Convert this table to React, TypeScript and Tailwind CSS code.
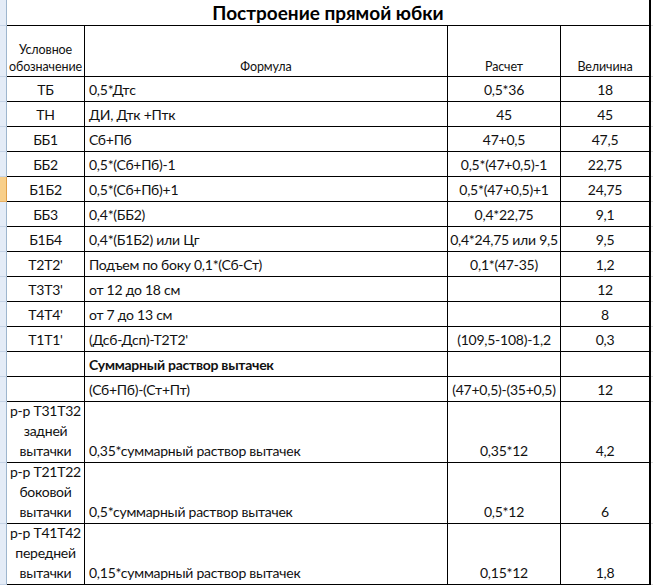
type Row = { mark: string[]; formula: string; calc: string; value: string; bold?: boolean; tall?: boolean };

const rows: Row[] = [
  { mark: ["ТБ"], formula: "0,5*Дтс", calc: "0,5*36", value: "18" },
  { mark: ["ТН"], formula: "ДИ, Дтк +Птк", calc: "45", value: "45" },
  { mark: ["ББ1"], formula: "Сб+Пб", calc: "47+0,5", value: "47,5" },
  { mark: ["ББ2"], formula: "0,5*(Сб+Пб)-1", calc: "0,5*(47+0,5)-1", value: "22,75" },
  { mark: ["Б1Б2"], formula: "0,5*(Сб+Пб)+1", calc: "0,5*(47+0,5)+1", value: "24,75" },
  { mark: ["ББ3"], formula: "0,4*(ББ2)", calc: "0,4*22,75", value: "9,1" },
  { mark: ["Б1Б4"], formula: "0,4*(Б1Б2) или Цг", calc: "0,4*24,75 или 9,5", value: "9,5" },
  { mark: ["Т2Т2'"], formula: "Подъем по боку 0,1*(Сб-Ст)", calc: "0,1*(47-35)", value: "1,2" },
  { mark: ["Т3Т3'"], formula: "от 12 до 18 см", calc: "", value: "12" },
  { mark: ["Т4Т4'"], formula: "от 7 до 13 см", calc: "", value: "8" },
  { mark: ["Т1Т1'"], formula: "(Дсб-Дсп)-Т2Т2'", calc: "(109,5-108)-1,2", value: "0,3" },
  { mark: [""], formula: "Суммарный раствор вытачек", calc: "", value: "", bold: true },
  { mark: [""], formula: "(Сб+Пб)-(Ст+Пт)", calc: "(47+0,5)-(35+0,5)", value: "12" },
  { mark: ["р-р Т31Т32", "задней", "вытачки"], formula: "0,35*суммарный раствор вытачек", calc: "0,35*12", value: "4,2", tall: true },
  { mark: ["р-р Т21Т22", "боковой", "вытачки"], formula: "0,5*суммарный раствор вытачек", calc: "0,5*12", value: "6", tall: true },
  { mark: ["р-р Т41Т42", "передней", "вытачки"], formula: "0,15*суммарный раствор вытачек", calc: "0,15*12", value: "1,8", tall: true },
];

// cropped Excel row header on the left edge
const RowHead = ({ active }: { active?: boolean }) => (
  <div
    className={`w-[7px] shrink-0 border-r border-b ${
      active ? "bg-[#f8cf8a] border-r-[#e0a04a] border-b-[#e8b064]" : "bg-[#e4ecf7] border-r-[#9eb6ce] border-b-[#c5d3e6]"
    }`}
  />
);

const Gutter = () => <div className="flex-1 border-b border-[#d9d9d9] bg-white" />;

export default function App() {
  return (
    <div className="w-[653px] h-[585px] overflow-hidden bg-white text-[#111] font-['Lato','Liberation_Sans',sans-serif]">
      {/* title */}
      <div className="flex h-[26px]">
        <RowHead />
        <div className="w-[644px] shrink-0 border-b border-r-2 border-black flex items-end justify-center pb-[1px]">
          <span className="text-[19px] font-bold leading-[22px] text-black">Построение прямой юбки</span>
        </div>
        <Gutter />
      </div>

      {/* header */}
      <div className="flex h-[51px] text-[12.5px] leading-[17px] tracking-[-0.1px]">
        <RowHead />
        <div className="w-[78px] shrink-0 border-r border-b border-black flex flex-col items-center justify-end pb-[1px] text-center">
          <span>Условное</span>
          <span>обозначение</span>
        </div>
        <div className="w-[363px] shrink-0 border-r border-b border-black flex items-end justify-center pb-[1px]">Формула</div>
        <div className="w-[113px] shrink-0 border-r border-b border-black flex items-end justify-center pb-[1px]">Расчет</div>
        <div className="w-[90px] shrink-0 border-r-2 border-b border-black flex items-end justify-center pb-[1px]">Величина</div>
        <Gutter />
      </div>

      {rows.map((r, i) => (
        <div key={i} className={`flex text-[14px] leading-[20px] tracking-[-0.25px] ${r.tall ? "h-[61px]" : "h-[25px]"}`}>
          <RowHead active={i === 4} />
          <div className="w-[78px] shrink-0 border-r border-b border-black flex flex-col items-center justify-end pb-[1px] text-center whitespace-nowrap">
            {r.mark.map((m, j) => (
              <span key={j}>{m}</span>
            ))}
          </div>
          <div className={`w-[363px] shrink-0 border-r border-b border-black flex items-end pl-[4px] pb-[1px] whitespace-nowrap ${r.bold ? "font-bold" : ""}`}>
            {r.formula}
          </div>
          <div className="w-[113px] shrink-0 border-r border-b border-black flex items-end justify-center pb-[1px] whitespace-nowrap">{r.calc}</div>
          <div className="w-[90px] shrink-0 border-r-2 border-b border-black flex items-end justify-center pb-[1px]">{r.value}</div>
          <Gutter />
        </div>
      ))}
    </div>
  );
}
